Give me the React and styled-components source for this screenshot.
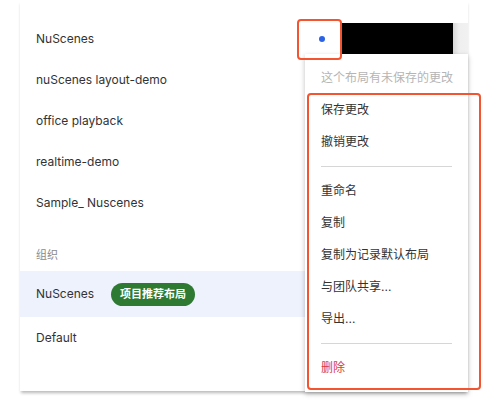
import React from "react";
import styled, { createGlobalStyle } from "styled-components";

const GlobalStyle = createGlobalStyle`
  body {
    margin: 0;
    background: #fff;
    font-family: Inter, "Noto Sans CJK SC", sans-serif;
    color: #2f2f2f;
  }
`;

const layouts = [
  "NuScenes",
  "nuScenes layout-demo",
  "office playback",
  "realtime-demo",
  "Sample_ Nuscenes",
];

const menuGroups = [
  ["保存更改", "撤销更改"],
  ["重命名", "复制", "复制为记录默认布局", "与团队共享...", "导出..."],
];

const App = () => {
  return (
    <Page>
      <GlobalStyle />
      <Panel>
        {layouts.map((name, i) => (
          <Row key={name}>
            <Label>{name}</Label>
            {i === 0 && (
              <Actions>
                <DotSlot>
                  <Dot />
                </DotSlot>
                <Redacted />
                <Edge />
              </Actions>
            )}
          </Row>
        ))}
        <SectionTitle>组织</SectionTitle>
        <Row $active $tall>
          <Label>NuScenes</Label>
          <Badge>项目推荐布局</Badge>
        </Row>
        <Row>
          <Label>Default</Label>
        </Row>
      </Panel>

      <Menu>
        <MenuHint>这个布局有未保存的更改</MenuHint>
        {menuGroups.map((group, gi) => (
          <React.Fragment key={gi}>
            {group.map((item) => (
              <MenuItem key={item}>{item}</MenuItem>
            ))}
            <Divider />
          </React.Fragment>
        ))}
        <MenuItem $danger>删除</MenuItem>
      </Menu>

      <Marker $left={297} $top={19} $width={45} $height={41} />
      <Marker $left={307} $top={93} $width={174} $height={297} />
    </Page>
  );
};

const Page = styled.div`
  position: relative;
  width: 501px;
  height: 415px;
  overflow: hidden;
`;

const Panel = styled.div`
  margin-left: 20px;
  width: 448px;
  padding: 18px 0 33px;
  background: #fff;
  box-shadow: 0 3px 3px -1px rgba(0, 0, 0, 0.28);
`;

const Row = styled.div`
  display: flex;
  align-items: center;
  height: ${(p) => (p.$tall ? "46px" : "41px")};
  padding-left: 16px;
  background: ${(p) => (p.$active ? "#edf2fd" : "transparent")};
`;

const Label = styled.span`
  font-size: 12px;
  line-height: 16px;
  color: #333;
`;

const Actions = styled.div`
  display: flex;
  height: 32px;
  margin-left: auto;
`;

const DotSlot = styled.div`
  display: flex;
  align-items: center;
  width: 44px;
  padding-left: 23px;
  box-sizing: border-box;
  background: #fff;
`;

const Dot = styled.span`
  width: 6px;
  height: 6px;
  border-radius: 50%;
  background: #2b62e6;
`;

const Redacted = styled.div`
  width: 113px;
  background: #000;
`;

const Edge = styled.div`
  width: 15px;
  background: linear-gradient(to right, #d8d8d8, #efefef 40%, #f1f1f1);
`;

const SectionTitle = styled.div`
  display: flex;
  align-items: flex-end;
  height: 48px;
  padding: 0 0 8px 16px;
  box-sizing: border-box;
  font-size: 11px;
  line-height: 16px;
  color: #8a8a8a;
`;

const Badge = styled.span`
  margin-left: 17px;
  height: 23px;
  padding: 0 9px;
  border-radius: 12px;
  background: #2e7a33;
  color: #fff;
  font-size: 11px;
  font-weight: 700;
  line-height: 23px;
`;

const Menu = styled.div`
  position: absolute;
  left: 305px;
  top: 54px;
  width: 163px;
  padding: 8px 0;
  background: #fff;
  box-shadow: 0 2px 5px rgba(0, 0, 0, 0.25);
`;

const MenuItem = styled.div`
  height: 32px;
  padding: 0 16px;
  font-size: 12px;
  line-height: 32px;
  color: ${(p) => (p.$danger ? "#d93a3a" : "#333")};
  white-space: nowrap;
`;

const MenuHint = styled(MenuItem)`
  color: #b5b5b5;
`;

const Divider = styled.div`
  height: 1px;
  margin: 8px 16px;
  background: #d6d6d6;
`;

const Marker = styled.div`
  position: absolute;
  left: ${(p) => p.$left}px;
  top: ${(p) => p.$top}px;
  width: ${(p) => p.$width}px;
  height: ${(p) => p.$height}px;
  box-sizing: border-box;
  border: 2px solid #f2552f;
  border-radius: 4px;
  pointer-events: none;
`;

export default App;
